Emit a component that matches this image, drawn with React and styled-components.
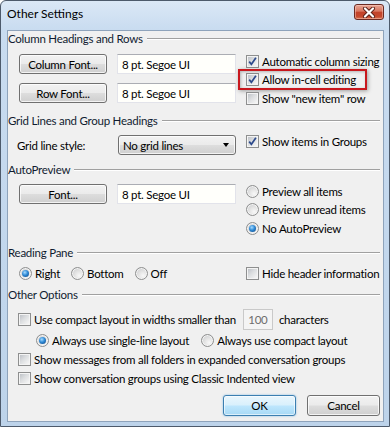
import React from "react";
import styled, { createGlobalStyle, css } from "styled-components";

const GlobalStyle = createGlobalStyle`
  html, body { margin: 0; padding: 0; background: #fff; }
  body {
    font-family: Lato, "Liberation Sans", sans-serif;
    font-size: 11.5px;
    letter-spacing: -0.25px;
    color: #000;
  }
  * { box-sizing: border-box; }
`;

const Window = styled.div`
  width: 390px;
  height: 427px;
  display: flex;
  flex-direction: column;
  background: linear-gradient(#dbe8f6, #c9dcf0 28px, #bdd3ea);
  border: 1px solid #4d5a6b;
  border-radius: 6px 6px 0 0;
  padding: 0 5px 4px 6px;
`;

const TitleBar = styled.div`
  height: 29px;
  display: flex;
  align-items: flex-start;
  justify-content: space-between;
`;

const Title = styled.div`
  margin-top: 5px;
  line-height: 16px;
  font-size: 12px;
  letter-spacing: 0;
  color: #000;
`;

const CloseButton = styled.div`
  width: 30px;
  height: 16px;
  margin-top: 3px;
  display: flex;
  align-items: center;
  justify-content: center;
  border: 1px solid #6b2a22;
  border-radius: 3px;
  background: linear-gradient(#e9a696 0%, #d8765f 45%, #c2432a 50%, #c4472c 80%, #d56f4e 100%);
  box-shadow: inset 0 0 0 1px rgba(255, 215, 205, 0.45);
`;

const Client = styled.div`
  flex: 1;
  display: flex;
  flex-direction: column;
  background: #f0f0f0;
  border: 1px solid #8ea3bb;
  padding: 0 3px 5px 0;
`;

const GroupHeader = styled.div`
  display: flex;
  align-items: center;
  gap: 4px;
  height: 16px;
  line-height: 16px;
  color: #101c30;

  &::after {
    content: "";
    flex: 1;
    border-top: 1px solid #a0a0a0;
    border-bottom: 1px solid #fff;
  }
`;

const GroupBody = styled.div`
  display: grid;
  grid-template-columns: 217px minmax(0, 1fr);
  column-gap: 10px;
  padding: 0 0 ${(p) => p.$bottom || 0}px 11px;
`;

const Column = styled.div`
  display: flex;
  flex-direction: column;
  gap: ${(p) => p.$gap || 0}px;
  padding-top: ${(p) => p.$top || 0}px;
`;

const FieldRow = styled.div`
  display: flex;
  align-items: center;
  gap: 10px;
`;

const buttonFace = css`
  border: 1px solid #707070;
  border-radius: 3px;
  background: linear-gradient(#f2f2f2 0%, #ebebeb 48%, #dddddd 52%, #cfcfcf 100%);
  box-shadow: inset 0 0 0 1px rgba(255, 255, 255, 0.75);
`;

const Button = styled.div`
  ${buttonFace}
  width: ${(p) => p.$width || 88}px;
  height: ${(p) => p.$height || 20}px;
  display: flex;
  align-items: center;
  justify-content: center;
  ${(p) =>
    p.$default &&
    css`
      border-color: #3c7fb1;
      background: linear-gradient(#eaf6fd 0%, #d9f0fc 48%, #bee6fd 52%, #a7d9f5 100%);
      box-shadow: inset 0 0 0 1px rgba(255, 255, 255, 0.6), 0 0 2px #7ab6e0;
    `}
`;

const TextBox = styled.div`
  width: ${(p) => p.$width || 119}px;
  height: ${(p) => p.$height || 20}px;
  display: flex;
  align-items: center;
  padding-left: ${(p) => p.$pad ?? 4}px;
  justify-content: ${(p) => (p.$center ? "center" : "flex-start")};
  margin: ${(p) => p.$margin || 0};
  background: #fffffb;
  border: 1px solid #e2e3ea;
  border-top-color: #abadb3;
  ${(p) =>
    p.$disabled &&
    css`
      background: #f4f4f4;
      border-color: #c9c9c9;
      color: #6d6d6d;
    `}
`;

const Combo = styled.div`
  ${buttonFace}
  width: 118px;
  height: 20px;
  display: flex;
  align-items: center;
  justify-content: space-between;
  padding: 0 6px 0 4px;
`;

const Arrow = styled.span`
  width: 0;
  height: 0;
  border-left: 3.5px solid transparent;
  border-right: 3.5px solid transparent;
  border-top: 4px solid #000;
`;

const InlineLabel = styled.span`
  flex: 1;
  margin-left: -2px;
`;

const Option = styled.div`
  display: flex;
  align-items: center;
  gap: 3px;
  height: ${(p) => p.$height || 18.5}px;
  white-space: nowrap;
  position: relative;
  ${(p) =>
    p.$highlight &&
    css`
      &::after {
        content: "";
        position: absolute;
        left: -8px;
        width: 125px;
        top: -1.5px;
        bottom: -1px;
        border: 2px solid #c8171d;
        box-shadow: 1px 1px 4px rgba(0, 0, 0, 0.35), inset 1px 1px 3px rgba(0, 0, 0, 0.25);
      }
    `}
`;

const Box = styled.span`
  width: 13px;
  height: 13px;
  flex: none;
  display: flex;
  align-items: center;
  justify-content: center;
  border: 1px solid #8e8f8f;
  background: linear-gradient(135deg, #b8bcc2 0%, #dcdee0 45%, #f6f6f6 90%);
  box-shadow: inset 0 0 0 1px #f4f4f4;
`;

const Dot = styled.span`
  width: 13px;
  height: 13px;
  flex: none;
  border-radius: 50%;
  border: 1px solid #8e8f8f;
  display: flex;
  align-items: center;
  justify-content: center;
  background: radial-gradient(circle at 65% 70%, #f8f8f8 0%, #e2e2e2 45%, #c3c5c8 100%);
  box-shadow: inset 0 0 0 1px #f4f4f4;

  &::after {
    content: "";
    display: ${(p) => (p.$on ? "block" : "none")};
    width: 7px;
    height: 7px;
    border-radius: 50%;
    background: radial-gradient(circle at 40% 35%, #a6dbff 0%, #2f8ad6 45%, #0b3f7a 100%);
  }
`;

const Row = styled.div`
  display: flex;
  align-items: center;
  gap: ${(p) => p.$gap || 0}px;
  height: ${(p) => p.$height || 19}px;
  padding-left: ${(p) => p.$indent || 0}px;
`;

const Stack = styled.div`
  display: flex;
  flex-direction: column;
  padding: ${(p) => p.$top || 0}px 0 0 10px;
`;

const Footer = styled.div`
  display: flex;
  justify-content: flex-end;
  gap: 11px;
  margin-top: auto;
`;

function Check({ on, children, highlight, height }) {
  return (
    <Option $highlight={highlight} $height={height}>
      <Box>
        {on && (
          <svg width="11" height="11" viewBox="0 0 11 11">
            <path d="M2.2 5.6 L4.4 8.3 L8.9 1.8" fill="none" stroke="#2d4a8c" strokeWidth="1.7" />
          </svg>
        )}
      </Box>
      {children}
    </Option>
  );
}

function Radio({ on, children, height }) {
  return (
    <Option $height={height}>
      <Dot $on={on} />
      {children}
    </Option>
  );
}

export default function App() {
  return (
    <>
      <GlobalStyle />
      <Window>
        <TitleBar>
          <Title>Other Settings</Title>
          <CloseButton>
            <svg width="14" height="11" viewBox="0 0 14 11">
              <path d="M3 1.5 L11 9.5 M11 1.5 L3 9.5" stroke="#5a2018" strokeWidth="4" strokeLinecap="round" />
              <path d="M3 1.5 L11 9.5 M11 1.5 L3 9.5" stroke="#fff" strokeWidth="2.2" strokeLinecap="round" />
            </svg>
          </CloseButton>
        </TitleBar>
        <Client>
          <GroupHeader>Column Headings and Rows</GroupHeader>
          <GroupBody $bottom={5}>
            <Column $top={7} $gap={9}>
              <FieldRow>
                <Button>Column Font...</Button>
                <TextBox>8 pt. Segoe UI</TextBox>
              </FieldRow>
              <FieldRow>
                <Button>Row Font...</Button>
                <TextBox>8 pt. Segoe UI</TextBox>
              </FieldRow>
            </Column>
            <Column $top={5}>
              <Check on>Automatic column sizing</Check>
              <Check on highlight>Allow in-cell editing</Check>
              <Check>Show "new item" row</Check>
            </Column>
          </GroupBody>

          <GroupHeader>Grid Lines and Group Headings</GroupHeader>
          <GroupBody $bottom={7}>
            <Column $top={6.5}>
              <FieldRow>
                <InlineLabel>Grid line style:</InlineLabel>
                <Combo>
                  No grid lines
                  <Arrow />
                </Combo>
              </FieldRow>
            </Column>
            <Column $top={4}>
              <Check on>Show items in Groups</Check>
            </Column>
          </GroupBody>

          <GroupHeader>AutoPreview</GroupHeader>
          <GroupBody $bottom={7}>
            <Column $top={6}>
              <FieldRow>
                <Button>Font...</Button>
                <TextBox>8 pt. Segoe UI</TextBox>
              </FieldRow>
            </Column>
            <Column $top={4}>
              <Radio>Preview all items</Radio>
              <Radio>Preview unread items</Radio>
              <Radio on>No AutoPreview</Radio>
            </Column>
          </GroupBody>

          <GroupHeader>Reading Pane</GroupHeader>
          <GroupBody $bottom={4.75}>
            <Column $top={3.25}>
              <Row $gap={11} $height={18.5} $indent={-1}>
                <Radio on>Right</Radio>
                <Radio>Bottom</Radio>
                <Radio>Off</Radio>
              </Row>
            </Column>
            <Column $top={3.25}>
              <Check>Hide header information</Check>
            </Column>
          </GroupBody>

          <GroupHeader>Other Options</GroupHeader>
          <Stack $top={5.5}>
            <Row $height={22}>
              <Check height={22}>Use compact layout in widths smaller than</Check>
              <TextBox $width={30} $height={21} $disabled $center $pad={0} $margin="0 6px 0 7px">
                100
              </TextBox>
              characters
            </Row>
            <Row $gap={12} $indent={18}>
              <Radio on height={19}>Always use single-line layout</Radio>
              <Radio height={19}>Always use compact layout</Radio>
            </Row>
            <Check height={19}>Show messages from all folders in expanded conversation groups</Check>
            <Check height={19}>Show conversation groups using Classic Indented view</Check>
          </Stack>
          <Footer>
            <Button $width={73} $height={21} $default>OK</Button>
            <Button $width={73} $height={21}>Cancel</Button>
          </Footer>
        </Client>
      </Window>
    </>
  );
}
